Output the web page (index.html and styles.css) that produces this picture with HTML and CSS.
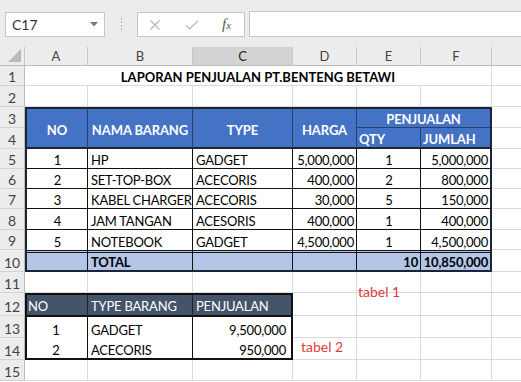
FILE: index.html
```html
<!DOCTYPE html>
<html>
<head>
<meta charset="utf-8">
<title>Laporan Penjualan</title>
<link rel="stylesheet" href="styles.css">
</head>
<body>
<div class="app">
  <div class="fbar">
    <div class="namebox">
      <span>C17</span>
      <svg class="dd" width="8" height="5" viewBox="0 0 8 5"><polygon points="0,0 8,0 4,4.5" fill="#7a7a7a"/></svg>
    </div>
    <div class="grip">
      <svg width="3" height="12" viewBox="0 0 3 12"><rect x="1" y="0" width="1" height="1.5" fill="#a8a8a8"/><rect x="1" y="3.5" width="1" height="1.5" fill="#a8a8a8"/><rect x="1" y="7" width="1" height="1.5" fill="#a8a8a8"/><rect x="1" y="10.5" width="1" height="1.5" fill="#a8a8a8"/></svg>
    </div>
    <div class="fbtns">
      <svg class="ic-x" width="10" height="10" viewBox="0 0 10 10"><path d="M0.5 0.5 L9.5 9.5 M9.5 0.5 L0.5 9.5" stroke="#b3b3b3" stroke-width="1.1" fill="none"/></svg>
      <svg class="ic-ok" width="14" height="10" viewBox="0 0 14 10"><path d="M0.8 5.2 L4.6 9 L13.2 0.6" stroke="#b3b3b3" stroke-width="1.2" fill="none"/></svg>
      <span class="fx">f<span class="fxx">x</span></span>
    </div>
    <div class="finput"></div>
  </div>

  <div class="sheet">
    <!-- column headers -->
    <div class="ch corner"><svg width="14" height="14" viewBox="0 0 14 14"><polygon points="13,0 13,13 0,13" fill="#b9b9b9"/></svg></div>
    <div class="ch">A</div>
    <div class="ch">B</div>
    <div class="ch sel">C</div>
    <div class="ch">D</div>
    <div class="ch">E</div>
    <div class="ch">F</div>
    <div class="ch">G</div>

    <!-- row 1 -->
    <div class="rh">1</div>
    <div class="c title">LAPORAN PENJUALAN PT.BENTENG BETAWI</div>
    <div class="c"></div>

    <!-- row 2 -->
    <div class="rh">2</div>
    <div class="c"></div><div class="c"></div><div class="c"></div><div class="c"></div><div class="c"></div><div class="c"></div>
    <div class="c"></div>

    <!-- row 3 with table 1 -->
    <div class="rh">3</div>
    <div class="t1">
      <div class="th rs">NO</div>
      <div class="th rs">NAMA BARANG</div>
      <div class="th rs">TYPE</div>
      <div class="th rs">HARGA</div>
      <div class="th cs">PENJUALAN</div>
      <div class="th sub">QTY</div>
      <div class="th sub last">JUMLAH</div>

      <div class="td ctr">1</div><div class="td">HP</div><div class="td">GADGET</div><div class="td r">5,000,000</div><div class="td ctr">1</div><div class="td r last">5,000,000</div>
      <div class="td ctr">2</div><div class="td">SET-TOP-BOX</div><div class="td">ACECORIS</div><div class="td r">400,000</div><div class="td ctr">2</div><div class="td r last">800,000</div>
      <div class="td ctr">3</div><div class="td">KABEL CHARGER</div><div class="td">ACECORIS</div><div class="td r">30,000</div><div class="td ctr">5</div><div class="td r last">150,000</div>
      <div class="td ctr">4</div><div class="td">JAM TANGAN</div><div class="td">ACESORIS</div><div class="td r">400,000</div><div class="td ctr">1</div><div class="td r last">400,000</div>
      <div class="td ctr nb">5</div><div class="td nb">NOTEBOOK</div><div class="td nb">GADGET</div><div class="td r nb">4,500,000</div><div class="td ctr nb">1</div><div class="td r last nb">4,500,000</div>

      <div class="td tot"></div><div class="td tot">TOTAL</div><div class="td tot"></div><div class="td tot"></div><div class="td tot r">10</div><div class="td tot r last">10,850,000</div>
    </div>
    <div class="c"></div>

    <div class="rh">4</div><div class="c"></div>
    <div class="rh">5</div><div class="c"></div>
    <div class="rh">6</div><div class="c"></div>
    <div class="rh">7</div><div class="c"></div>
    <div class="rh">8</div><div class="c"></div>
    <div class="rh">9</div><div class="c"></div>
    <div class="rh">10</div><div class="c"></div>

    <!-- row 11 -->
    <div class="rh">11</div>
    <div class="c"></div><div class="c"></div><div class="c"></div><div class="c"></div><div class="c"></div><div class="c"></div><div class="c"></div>

    <!-- row 12 with table 2 -->
    <div class="rh">12</div>
    <div class="t2">
      <div class="h2 first">NO</div>
      <div class="h2">TYPE BARANG</div>
      <div class="h2 last">PENJUALAN</div>

      <div class="d2 ctr">1</div><div class="d2">GADGET</div><div class="d2 r last">9,500,000</div>
      <div class="d2 ctr">2</div><div class="d2">ACECORIS</div><div class="d2 r last">950,000</div>
    </div>
    <div class="c"></div><div class="c"></div><div class="c"></div><div class="c"></div>

    <div class="rh">13</div>
    <div class="c"></div><div class="c"></div><div class="c"></div><div class="c"></div>

    <div class="rh">14</div>
    <div class="c"></div><div class="c"></div><div class="c"></div><div class="c"></div>

    <div class="rh">15</div>
    <div class="c"></div><div class="c"></div><div class="c"></div><div class="c"></div><div class="c"></div><div class="c"></div><div class="c"></div>

    <div class="note note1">tabel 1</div>
    <div class="note note2">tabel 2</div>
  </div>
</div>
</body>
</html>
```

FILE: styles.css
```css
* { box-sizing: border-box; }
html, body { margin: 0; padding: 0; }
body {
  width: 521px;
  height: 382px;
  overflow: hidden;
  background: #fff;
  font-family: Lato, "Noto Sans", sans-serif;
}
.app { width: 521px; height: 382px; overflow: hidden; }

/* formula bar */
.fbar {
  height: 47px;
  background: #ececec;
  display: flex;
  align-items: flex-start;
  padding-top: 11px;
}
.namebox {
  margin-left: 5px;
  margin-top: 1px;
  width: 100px;
  height: 25px;
  background: #fff;
  border: 1px solid #c6c6c6;
  display: flex;
  align-items: center;
  justify-content: space-between;
  padding: 0 6px 0 6px;
  font-size: 14px;
  color: #333;
}
.grip {
  width: 32px;
  height: 26px;
  display: flex;
  align-items: center;
  justify-content: center;
}
.fbtns {
  width: 108px;
  height: 25px;
  margin-top: 1px;
  background: #fff;
  border: 1px solid #c6c6c6;
  display: flex;
  align-items: center;
  padding-left: 12px;
}
.ic-ok { margin-left: 25px; }
.fx {
  margin-left: 23px;
  font-family: "Liberation Serif", serif;
  font-style: italic;
  font-size: 15px;
  color: #555;
  line-height: 1;
}
.fxx { font-size: 11px; }
.finput {
  flex: 1;
  height: 26px;
  margin-left: 4px;
  background: #fff;
  border: 1px solid #c6c6c6;
  border-right: none;
}

/* sheet grid */
.sheet {
  position: relative;
  display: grid;
  grid-template-columns: 25px 63px 105px 100px 64px 64px 71px 71px;
  grid-template-rows: 19px 20px 21px 21px 21px 20px 20px 20px 21px 20px 22px 21px 23px 22px 22px 21px;
  width: 521px;
  height: 335px;
  overflow: hidden;
  font-size: 13px;
  color: #000;
}
.ch {
  background: #ececec;
  border-right: 1px solid #c6c6c6;
  border-bottom: 1px solid #bdbdbd;
  font-size: 13px;
  color: #444;
  display: flex;
  align-items: center;
  justify-content: center;
}
.ch.sel { background: #d3d3d3; color: #222; }
.ch.corner { justify-content: flex-end; align-items: flex-end; padding: 0 2px 2px 0; }
.rh {
  background: #ececec;
  border-right: 1px solid #bdbdbd;
  border-bottom: 1px solid #d2d2d2;
  color: #444;
  font-size: 14px;
  display: flex;
  align-items: flex-end;
  justify-content: center;
  line-height: 17px;
}
.c {
  border-right: 1px solid #dadada;
  border-bottom: 1px solid #dadada;
}
.title {
  grid-column: span 6;
  display: flex;
  align-items: flex-end;
  justify-content: center;
  font-weight: bold;
  font-size: 13px;
  line-height: 16px;
}

/* table 1 */
.t1 {
  grid-column: span 6;
  grid-row: span 8;
  border: 2px solid #1b2538;
  display: grid;
  grid-template-columns: 61px 105px 100px 64px 64px 69px;
  grid-template-rows: 19px 21px 20px 20px 20px 21px 20px 20px;
}
.th {
  background: #4472c4;
  color: #fff;
  font-weight: bold;
  border-right: 1px solid #2a3f6e;
  display: flex;
  align-items: center;
  justify-content: center;
  white-space: nowrap;
  letter-spacing: -0.1px;
}
.th.rs { grid-row: span 2; border-bottom: 2px solid #1b2538; padding-top: 3px; }
.th.cs { grid-column: span 2; border-right: none; border-bottom: 1px solid #2a3f6e; padding-top: 1px; }
.th.sub { border-bottom: 2px solid #1b2538; justify-content: flex-start; padding-left: 2px; padding-top: 2px; }
.td {
  border-right: 1px solid #111;
  border-bottom: 1px solid #111;
  display: flex;
  align-items: flex-end;
  padding: 0 2px 0 3px;
  line-height: 15px;
  white-space: nowrap;
  letter-spacing: -0.22px;
}
.ctr { justify-content: center; }
.r { justify-content: flex-end; }
.last { border-right: none; }
.td.nb { border-bottom: none; }
.td.tot {
  background: #b4c6e7;
  border-top: 3px double #111;
  border-bottom: none;
  font-weight: bold;
}

/* table 2 */
.t2 {
  grid-column: span 3;
  grid-row: span 3;
  border: 2px solid #111;
  display: grid;
  grid-template-columns: 61px 105px 98px;
  grid-template-rows: 22px 21px 20px;
}
.h2 {
  background: #44546a;
  color: #fff;
  border-right: 1px solid #222;
  border-bottom: 2px solid #111;
  display: flex;
  align-items: center;
  padding: 2px 0 0 3px;
  white-space: nowrap;
  letter-spacing: -0.2px;
}
.h2.first { padding-left: 1px; }
.h2.last { border-right: none; }
.d2 {
  border-right: 1px solid #111;
  display: flex;
  align-items: flex-end;
  padding: 0 5px 0 3px;
  line-height: 15px;
  white-space: nowrap;
  letter-spacing: -0.2px;
}
.d2.last { border-right: none; }

/* floating text boxes */
.note {
  position: absolute;
  color: #e03a3a;
  font-size: 14px;
  line-height: 16px;
}
.note1 { left: 358px; top: 237px; }
.note2 { left: 301px; top: 292px; }
```
